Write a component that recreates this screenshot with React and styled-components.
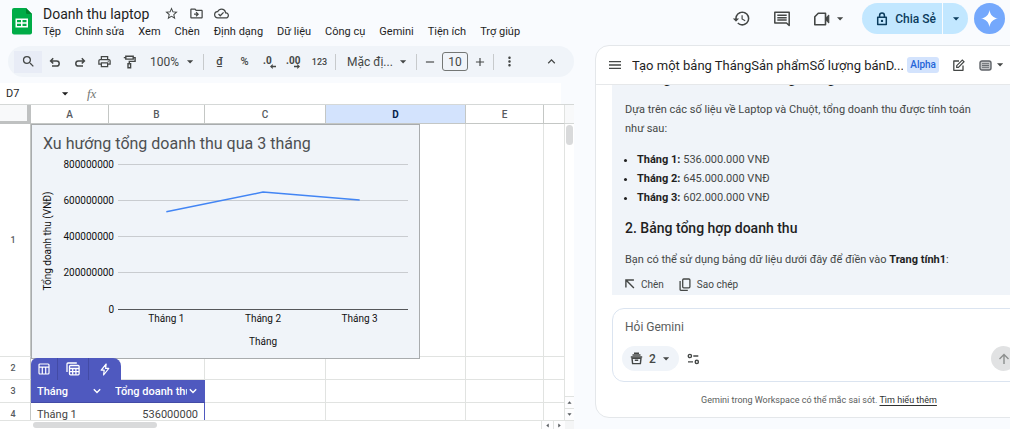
import React from "react";
import styled, { createGlobalStyle, css } from "styled-components";
import {
  MdStarBorder,
  MdOutlineDriveFileMove,
  MdOutlineCloudDone,
  MdSearch,
  MdOutlinePrint,
  MdHistory,
  MdMoreVert,
  MdKeyboardArrowUp,
  MdMenu,
  MdAdd,
  MdRemove,
} from "react-icons/md";

const GlobalStyle = createGlobalStyle`
  *, *::before, *::after { box-sizing: border-box; }
  body {
    margin: 0;
    background: #f9fbfe;
    color: #1f1f1f;
    font-family: Roboto, "Open Sans", sans-serif;
    font-size: 11px;
  }
  button, input, select {
    margin: 0;
    padding: 0;
    border: 0;
    background: none;
    color: inherit;
    font: inherit;
  }
  svg { display: block; flex: none; }
`;

/* ---------- icons ---------- */

const Caret = ({ size = 8 }) => (
  <svg width={size} height={size} viewBox="0 0 8 8" fill="currentColor" aria-hidden="true">
    <path d="M1 2.200h6.200L4.100 5.600z" />
  </svg>
);

const Stroke = ({ width = 16, height = 16, box, weight = 1.5, children }) => (
  <svg
    width={width}
    height={height}
    viewBox={box || `0 0 ${width} ${height}`}
    fill="none"
    stroke="currentColor"
    strokeWidth={weight}
    aria-hidden="true"
  >
    {children}
  </svg>
);

const SheetsLogo = () => (
  <svg width="20" height="27" viewBox="0 0 20 27" role="img" aria-label="Trang tính">
    <path d="M2 0h12l6 6v18.500a2 2 0 0 1-2 2H2a2 2 0 0 1-2-2V2a2 2 0 0 1 2-2z" fill="#00ac47" />
    <path d="M14 0l6 6h-4.500A1.500 1.500 0 0 1 14 4.500z" fill="#00832d" />
    <path
      d="M3.500 10.500h12.500v9H3.500zM5 12v2.200h4V12zm5.500 0v2.200h4V12zM5 15.700v2.300h4v-2.300zm5.500 0v2.300h4v-2.300z"
      fill="#fff"
      fillRule="evenodd"
    />
  </svg>
);

const UndoIcon = () => (
  <Stroke width={12} height={12}>
    <path d="M4.200 2.300L1.600 4.900l2.600 2.600M1.800 4.900h5.800a2.600 2.600 0 0 1 0 5.200H3" />
  </Stroke>
);

const RedoIcon = () => (
  <Stroke width={12} height={12}>
    <path d="M7.800 2.300l2.600 2.600-2.600 2.600M10.200 4.900H4.400a2.600 2.600 0 0 0 0 5.200H9" />
  </Stroke>
);

const PaintIcon = () => (
  <Stroke width={13} height={14} weight={1.4}>
    <path d="M2.800 1.200h7.400v2.900H2.800zM10.200 2.600h1.900v3.800H6.300v2.200M2.800 2.600H.800M5 8.800h2.600v4H5z" />
  </Stroke>
);

const DecimalIcon = ({ digits, direction }) => (
  <svg width="18" height="16" viewBox="0 0 18 16" fill="currentColor" aria-hidden="true">
    <text x={digits.length > 2 ? 0 : 2} y="10" fontSize="10" fontWeight="700" fontFamily="Roboto, sans-serif">
      {digits}
    </text>
    <path
      d={
        direction === "left"
          ? "M9 12.500l2.700-2.400v1.700H15v1.400h-3.300v1.700z"
          : "M14 12.500l-2.700-2.400v1.700H8v1.400h3.300v1.700z"
      }
    />
  </svg>
);

const CommentIcon = () => (
  <Stroke width={18} height={18}>
    <path d="M1.800 2.300h14.400v13.200l-2.700-2.500H1.800z" strokeLinejoin="round" />
    <path d="M4.300 5.300h9.400M4.300 7.700h9.400M4.300 10.100h9.400" />
  </Stroke>
);

const MeetIcon = () => (
  <Stroke width={18} height={16} weight={1.600}>
    <path d="M5.300 2.300h7.200v11.400H1.800V5.800z" strokeLinejoin="round" />
    <path d="M12.500 7.200L15.800 4v8l-3.300-3.200z" fill="currentColor" strokeWidth="1" />
  </Stroke>
);

const LockIcon = () => (
  <Stroke width={12} height={14} weight={1.500}>
    <path d="M1.700 5.300h8.600v7.200H1.700zM3.600 5.300V3.400a2.400 2.400 0 0 1 4.800 0v1.900" strokeLinejoin="round" />
    <circle cx="6" cy="8.900" r="1.200" fill="currentColor" stroke="none" />
  </Stroke>
);

const SparkIcon = () => (
  <svg width="17" height="17" viewBox="0 0 16 16" fill="#fff" aria-hidden="true">
    <path d="M8 0c.7 4.700 3.300 7.300 8 8-4.700.7-7.300 3.300-8 8-.7-4.700-3.300-7.300-8-8 4.700-.7 7.300-3.300 8-8z" />
  </svg>
);

const EditIcon = () => (
  <Stroke width={13} height={13} weight={1.300}>
    <path d="M7 2H1.800v9.300H11V6.500" strokeLinejoin="round" />
    <path d="M4.700 8.400V6.700L10.300 1l1.700 1.700-5.600 5.700z" strokeWidth="1.200" />
  </Stroke>
);

const CardIcon = () => (
  <svg width="13" height="11" viewBox="0 0 13 11" fill="none" stroke="#5f6368" aria-hidden="true">
    <rect x="1" y="1" width="11" height="9" rx="2" fill="#c4c6c8" strokeWidth="1.400" />
    <path d="M3 3.700h7M3 5.500h7M3 7.300h7" strokeWidth=".900" />
  </svg>
);

const InsertIcon = () => (
  <Stroke width={10} height={10} weight={1.400}>
    <path d="M.900 8.500V1h8M1.200 1.200l7.700 7.800" />
  </Stroke>
);

const CopyIcon = () => (
  <Stroke width={12} height={13} weight={1.300}>
    <rect x="3.700" y="1" width="7.200" height="8.800" rx="1" />
    <path d="M1.100 3v8.400a1 1 0 0 0 1 1h6.700" />
  </Stroke>
);

const SourceIcon = () => (
  <Stroke width={13} height={13} weight={1.400}>
    <path d="M2 6.200h9l-.6 5.400H2.600z" strokeLinejoin="round" />
    <path d="M.800 5h11.400M2.500 3h8M4 1.200h5" />
    <path d="M4.800 8.300h3.400" />
  </Stroke>
);

const TuneIcon = () => (
  <Stroke width={13} height={12} weight={1.400}>
    <circle cx="2.900" cy="3" r="1.600" />
    <path d="M6.300 3h5M1 8.900h5" />
    <circle cx="9.800" cy="8.900" r="1.600" />
  </Stroke>
);

const TableIcon = () => (
  <Stroke width={12} height={12} weight={1.200}>
    <rect x="1" y="1" width="10" height="10" rx="1" />
    <path d="M1 4.200h10M4.300 4.200V11M7.700 4.200V11" />
  </Stroke>
);

const TablesIcon = () => (
  <Stroke width={14} height={14} weight={1.300}>
    <rect x="3.500" y="3.500" width="9.600" height="9.300" rx="1" />
    <path d="M3.500 6.500h9.600M3.500 9.600h9.600M6.700 6.500v6.300M9.900 6.500v6.300M1 10V2a1 1 0 0 1 1-1h8.800" />
  </Stroke>
);

const BoltIcon = () => (
  <Stroke width={10} height={13} weight={1.200}>
    <path d="M6.200 1L1.200 7.200h3L3.600 12l5.200-6.600H5.600z" strokeLinejoin="round" />
  </Stroke>
);

const ChevronIcon = () => (
  <Stroke width={8} height={6} weight={1.400}>
    <path d="M.800 1.200L4 4.400l3.200-3.200" />
  </Stroke>
);

const ArrowUpIcon = () => (
  <Stroke width={12} height={12} weight={1.400}>
    <path d="M6 11V1.500M1.500 6L6 1.500 10.500 6" />
  </Stroke>
);

/* ---------- page frame ---------- */

const Page = styled.div`
  display: flex;
  flex-direction: column;
  height: 100vh;
  overflow: hidden;
`;

const TopBar = styled.header`
  display: flex;
  align-items: flex-start;
  flex: none;
  height: 45px;
  padding: 3px 5px 0 12px;
`;

const LogoLink = styled.a`
  margin-top: 5px;
`;

const TitleBlock = styled.div`
  flex: 1;
  min-width: 0;
  padding-left: 11px;
`;

const TitleRow = styled.div`
  display: flex;
  align-items: center;
  gap: 10px;
  height: 21px;
  color: #444746;
`;

const DocTitle = styled.h1`
  margin: 0 5px 0 0;
  color: #1f1f1f;
  font-size: 14px;
  font-weight: 400;
  white-space: nowrap;
`;

const IconButton = styled.button`
  display: flex;
  align-items: center;
  justify-content: center;
  gap: ${(p) => p.$gap || 0}px;
  flex: none;
  width: ${(p) => (p.$width ? `${p.$width}px` : "auto")};
  height: ${(p) => (p.$height ? `${p.$height}px` : "auto")};
  color: ${(p) => p.$color || "#444746"};
  background: ${(p) => p.$background || "none"};
  border-radius: ${(p) => p.$radius || 0}px;
`;

const MenuBar = styled.nav`
  display: flex;
  gap: 14px;
  color: #1f1f1f;
`;

const MenuButton = styled.button`
  height: 15px;
  font-size: 11px;
  white-space: nowrap;
`;

const TopActions = styled.div`
  display: flex;
  align-items: center;
  gap: 22px;
  height: 31px;
`;

const ShareGroup = styled.div`
  display: flex;
  gap: 1px;
  height: 31px;
  color: #0b3c5d;
`;

const ShareButton = styled.button`
  display: flex;
  align-items: center;
  gap: 7px;
  padding: 0 6px 0 14px;
  background: #c2e7ff;
  border-radius: 16px 0 0 16px;
  font-size: 12px;
  font-weight: 500;
`;

const ShareMenuButton = styled.button`
  display: flex;
  align-items: center;
  justify-content: center;
  width: 25px;
  background: #c2e7ff;
  border-radius: 0 16px 16px 0;
`;

const AccountGroup = styled.div`
  display: flex;
  gap: 6px;
  margin-left: -4px;
`;

const Main = styled.main`
  display: flex;
  flex: 1;
  gap: 21px;
  min-height: 0;
`;

/* ---------- spreadsheet ---------- */

const SheetColumn = styled.section`
  display: flex;
  flex-direction: column;
  flex: 1;
  min-width: 0;
`;

const Toolbar = styled.div`
  display: flex;
  align-items: center;
  flex: none;
  height: 31px;
  margin: 1px 0 6px 8px;
  padding: 0 10px 0 6px;
  background: #f0f4f9;
  border-radius: 16px;
  color: #444746;
`;

const ToolButton = styled.button`
  display: flex;
  align-items: center;
  justify-content: center;
  flex: none;
  width: ${(p) => p.$width || 25}px;
  height: 22px;
  font-size: ${(p) => p.$size || 11}px;
  font-weight: 500;
  ${(p) => p.$active && css`background: #e8ecf6;`}
  ${(p) => p.$last && css`margin-left: auto;`}
`;

const Divider = styled.span`
  flex: none;
  width: 1px;
  height: 16px;
  margin: 0 3px;
  background: #c7cacc;
`;

const SelectBox = styled.label`
  display: grid;
  flex: none;
  align-items: center;
  width: ${(p) => p.$width}px;
  > * { grid-area: 1 / 1; }
  > svg { justify-self: end; margin-right: 6px; pointer-events: none; }
`;

const Select = styled.select`
  appearance: none;
  width: 100%;
  padding: 0 16px 0 8px;
  font-size: 12px;
  outline: none;
`;

const SizeInput = styled.input`
  width: 26px;
  height: 19px;
  margin: 0 2px;
  border: 1px solid #747775;
  border-radius: 3px;
  font-size: 12px;
  text-align: center;
`;

const FormulaRow = styled.div`
  flex: none;
  padding-right: 13px;
  border-bottom: 1px solid #d5d8d7;
`;

const FormulaBar = styled.div`
  display: flex;
  align-items: center;
  height: 21px;
  padding-left: 6px;
  background: #fff;
`;

const NameBox = styled.input`
  width: 55px;
  font-size: 11px;
`;

const FxMark = styled.label`
  margin-left: 18px;
  color: #747775;
  font: italic 13px "Liberation Serif", serif;
`;

const FormulaInput = styled.input`
  flex: 1;
  min-width: 0;
  margin-left: 8px;
`;

const GridArea = styled.div`
  display: grid;
  grid-template-columns: 1fr 9px;
  grid-template-rows: 1fr 8px;
  flex: 1;
  min-height: 0;
  background: #fff;
`;

const GridView = styled.div`
  position: relative;
  overflow: hidden;
  border-bottom: 1px solid #e1e3e1;
`;

const Grid = styled.table`
  width: 100%;
  table-layout: fixed;
  border-collapse: separate;
  border-spacing: 0;
`;

const ColumnHead = styled.th`
  height: 19px;
  padding: 0;
  border-right: 1px solid #c4c7c5;
  border-bottom: 1px solid #c4c7c5;
  background: ${(p) => (p.$selected ? "#d3e3fd" : "#fff")};
  color: ${(p) => (p.$selected ? "#041e49" : "#575b5f")};
  font-size: 10px;
  font-weight: ${(p) => (p.$selected ? 700 : 500)};
  &:last-child { border-right: 1px solid #e1e3e1; }
`;

const Corner = styled.td`
  padding: 0;
  background: #f8f9fa;
  border-right: 4px solid #bfc1c1;
  border-bottom: 3px solid #bfc1c1;
`;

const RowHead = styled.th`
  padding: 0 4px 0 0;
  border-right: 1px solid #c4c7c5;
  border-bottom: 1px solid #e1e3e1;
  color: #575b5f;
  font-size: 9px;
  font-weight: 500;
`;

const Row = styled.tr`
  height: ${(p) => p.$height}px;
`;

const Cell = styled.td`
  padding: 0 7px 0 6px;
  border-right: 1px solid #e1e3e1;
  border-bottom: 1px solid #e1e3e1;
  color: #434343;
  font-size: 11px;
  text-align: ${(p) => p.$align || "left"};
  ${(p) => p.$first && css`border-right-color: transparent;`}
  ${(p) => p.$last && css`
    padding-right: 6px;
    border-right-color: #4f59bf;
  `}
`;

const TableHead = styled.th`
  padding: 0 8px 0 6px;
  background: #4f59bf;
  border-bottom: 1px solid #434ba6;
  color: #fff;
  font-size: 11px;
  font-weight: 500;
  text-align: left;
`;

const HeadContent = styled.div`
  display: flex;
  align-items: center;
  justify-content: space-between;
  gap: 2px;
  > span { overflow: hidden; white-space: nowrap; }
`;

const ChartFrame = styled.figure`
  position: absolute;
  top: 19px;
  left: 31px;
  width: 389px;
  height: 235px;
  margin: 0;
  background: #f0f4f9;
  border: 1px solid #a9acae;
`;

const TableTools = styled.div`
  position: absolute;
  top: 253px;
  left: 31px;
  display: flex;
  height: 22px;
  overflow: hidden;
  background: #4f59bf;
  border-radius: 6px 8px 0 0;
  > button + button { border-left: 1px solid #434ba6; }
`;

const VerticalBar = styled.div`
  display: flex;
  flex-direction: column;
  border-bottom: 1px solid #e1e3e1;
`;

const BarCap = styled.div`
  height: 19px;
  background: #f8f9fa;
  border-bottom: 1px solid #d5d8d7;
`;

const VerticalThumb = styled.div`
  width: 7px;
  height: 20px;
  margin: 1px auto auto;
  background: #d9dadb;
  border-radius: 4px;
`;

const HorizontalBar = styled.div`
  display: flex;
  align-items: center;
  padding-left: 33px;
`;

const HorizontalThumb = styled.div`
  width: 124px;
  height: 6px;
  margin-right: auto;
  background: #d9dadb;
  border-radius: 3px;
`;

const ArrowButton = styled.button`
  display: flex;
  align-items: center;
  justify-content: center;
  width: ${(p) => (p.$side ? "12px" : "100%")};
  height: ${(p) => (p.$side ? "8px" : "12px")};
  color: #575b5f;
  background: #fdfdfe;
  border: 0 solid #e1e3e1;
  ${(p) => (p.$side ? css`border-left-width: 1px;` : css`border-top-width: 1px;`)}
`;

const BarCorner = styled.div`
  background: #f4f5f6;
`;

const TinyArrow = ({ turn }) => (
  <svg width="5" height="5" viewBox="0 0 6 6" fill="currentColor" aria-hidden="true">
    <path d="M.500 4.500L3 1.500l2.500 3z" transform={`rotate(${turn} 3 3)`} />
  </svg>
);

/* ---------- side panel ---------- */

/* The panel is wider than its visible part and runs past the window's right edge. */
const Panel = styled.aside`
  display: flex;
  flex-direction: column;
  flex: none;
  width: 448px;
  margin: 0 -33px 11px 0;
  overflow: hidden;
  background: #fff;
  border: 1px solid #e4e7ea;
  border-radius: 14px;
`;

const PanelHeader = styled.div`
  display: flex;
  align-items: center;
  flex: none;
  height: 39px;
  padding: 0 25px 0 11px;
  border-bottom: 1px solid #e6e8ea;
  color: #444746;
`;

const PanelTitle = styled.h2`
  flex: 1;
  min-width: 0;
  margin: 0 4px 0 9px;
  overflow: hidden;
  color: #1f1f1f;
  font-size: 13px;
  font-weight: 400;
  white-space: nowrap;
`;

const Badge = styled.span`
  margin-right: 13px;
  padding: 0 3px;
  background: #d3e3fd;
  border-radius: 3px;
  color: #2464d8;
  font-size: 10px;
  font-weight: 500;
  line-height: 16px;
`;

const Answer = styled.article`
  display: flex;
  flex-direction: column;
  justify-content: flex-end;
  flex: 1;
  gap: 12px;
  min-height: 0;
  margin: 0 16px;
  padding: 0 13px 2px;
  overflow: hidden;
  background: #f0f4f9;
  line-height: 19px;
`;

const AnswerText = styled.p`
  margin: 0;
  color: #444746;
  font-size: 11px;
  > b { color: #1f1f1f; }
`;

const AnswerHeading = styled.h3`
  margin: 0;
  font-size: 14px;
  font-weight: 500;
`;

const AnswerList = styled.ul`
  margin: 0;
  padding-left: 12px;
  color: #444746;
  font-size: 11px;
  b, li::marker { color: #1f1f1f; }
`;

const AnswerActions = styled.div`
  display: flex;
  gap: 15px;
  height: 18px;
  margin-top: -6px;
`;

const TextButton = styled.button`
  display: flex;
  align-items: center;
  gap: 6px;
  color: #444746;
  font-size: 10px;
`;

const Composer = styled.form`
  flex: none;
  margin: 13px 16px 0;
  padding: 8px 9px 10px;
  border: 1px solid #dbe4f0;
  border-radius: 12px;
`;

const PromptInput = styled.input`
  display: block;
  width: 100%;
  height: 20px;
  padding-left: 3px;
  font-size: 12px;
  &::placeholder { color: #5a5d5c; opacity: 1; }
`;

const ComposerRow = styled.div`
  display: flex;
  align-items: center;
  gap: 8px;
  margin-top: 9px;
`;

const SourceButton = styled.button`
  display: flex;
  align-items: center;
  gap: 6px;
  height: 25px;
  padding: 0 9px 0 8px;
  background: #f0f4f9;
  border-radius: 13px;
  color: #444746;
  font-size: 12px;
  font-weight: 500;
`;

const SendButton = styled.button`
  display: flex;
  align-items: center;
  justify-content: center;
  width: 25px;
  height: 25px;
  margin-left: auto;
  background: #e1e2e3;
  border-radius: 50%;
  color: #8c8f8e;
`;

const Disclaimer = styled.p`
  flex: none;
  margin: 0;
  padding: 11px 0 10px;
  color: #5a5d5c;
  font-size: 9px;
  line-height: 14px;
  text-align: center;
  > a { color: #303231; text-underline-offset: 2px; }
`;

/* ---------- data ---------- */

const menus = ["Tệp", "Chỉnh sửa", "Xem", "Chèn", "Định dạng", "Dữ liệu", "Công cụ", "Gemini", "Tiện ích", "Trợ giúp"];

const columns = [
  { name: "A", width: 78 },
  { name: "B", width: 96 },
  { name: "C", width: 121 },
  { name: "D", width: 140 },
  { name: "E", width: 78 },
];

const revenue = [
  { label: "Tháng 1", value: 536000000, text: "536.000.000 VNĐ" },
  { label: "Tháng 2", value: 645000000, text: "645.000.000 VNĐ" },
  { label: "Tháng 3", value: 602000000, text: "602.000.000 VNĐ" },
];

/* ---------- parts ---------- */

const plot = { left: 86, right: 376, top: 39, bottom: 184, max: 800000000 };
const toY = (value) => plot.bottom - (value / plot.max) * (plot.bottom - plot.top);
const toX = (index) => plot.left + ((plot.right - plot.left) * (index + 0.5)) / revenue.length;

const RevenueChart = () => (
  <ChartFrame>
    <svg width="387" height="233" viewBox="0 0 387 233" fontFamily="Roboto, sans-serif" fontSize="10" fill="#111">
      <text x="11" y="24" fontSize="16" fill="#4d5052">
        Xu hướng tổng doanh thu qua 3 tháng
      </text>
      {[800000000, 600000000, 400000000, 200000000, 0].map((value) => (
        <g key={value}>
          <line
            x1={plot.left}
            x2={plot.right}
            y1={Math.floor(toY(value)) + 0.5}
            y2={Math.floor(toY(value)) + 0.5}
            stroke={value ? "#c9ccd0" : "#55575a"}
          />
          <text x={plot.left - 4} y={Math.floor(toY(value)) + 4} textAnchor="end">
            {value}
          </text>
        </g>
      ))}
      <polyline
        points={revenue.map((item, index) => `${toX(index)},${toY(item.value)}`).join(" ")}
        fill="none"
        stroke="#4285f4"
        strokeWidth="1.500"
      />
      {revenue.map((item, index) => (
        <text key={item.label} x={toX(index)} y="197" textAnchor="middle">
          {item.label}
        </text>
      ))}
      <text x="231" y="220" textAnchor="middle">
        Tháng
      </text>
      <text x="19" y="116" textAnchor="middle" transform="rotate(-90 19 116)">
        Tổng doanh thu (VNĐ)
      </text>
    </svg>
  </ChartFrame>
);

const EmptyCells = ({ count }) => Array.from({ length: count }, (_, index) => <Cell key={index} />);

const Spreadsheet = () => (
  <GridArea>
    <GridView>
      <Grid>
        <colgroup>
          <col width="31" />
          {columns.map((column) => (
            <col key={column.name} width={column.width} />
          ))}
          <col />
        </colgroup>
        <thead>
          <tr>
            <Corner />
            {columns.map((column) => (
              <ColumnHead key={column.name} scope="col" $selected={column.name === "D"}>
                {column.name}
              </ColumnHead>
            ))}
            <ColumnHead />
          </tr>
        </thead>
        <tbody>
          <Row $height={233}>
            <RowHead scope="row">1</RowHead>
            <EmptyCells count={6} />
          </Row>
          <Row $height={23}>
            <RowHead scope="row">2</RowHead>
            <EmptyCells count={6} />
          </Row>
          <Row $height={23}>
            <RowHead scope="row">3</RowHead>
            <TableHead>
              <HeadContent>
                <span>Tháng</span>
                <ChevronIcon />
              </HeadContent>
            </TableHead>
            <TableHead>
              <HeadContent>
                <span>Tổng doanh thu</span>
                <ChevronIcon />
              </HeadContent>
            </TableHead>
            <EmptyCells count={4} />
          </Row>
          <Row $height={23}>
            <RowHead scope="row">4</RowHead>
            <Cell $first>{revenue[0].label}</Cell>
            <Cell $last $align="right">
              {revenue[0].value}
            </Cell>
            <EmptyCells count={4} />
          </Row>
        </tbody>
      </Grid>
      <RevenueChart />
      <TableTools>
        <IconButton $width={26} $color="#fff" aria-label="Bảng">
          <TableIcon />
        </IconButton>
        <IconButton $width={31} $color="#fff" aria-label="Chế độ xem bảng">
          <TablesIcon />
        </IconButton>
        <IconButton $width={33} $color="#fff" aria-label="Thao tác nhanh">
          <BoltIcon />
        </IconButton>
      </TableTools>
    </GridView>
    <VerticalBar>
      <BarCap />
      <VerticalThumb />
      <ArrowButton aria-label="Cuộn lên">
        <TinyArrow turn={0} />
      </ArrowButton>
      <ArrowButton aria-label="Cuộn xuống">
        <TinyArrow turn={180} />
      </ArrowButton>
    </VerticalBar>
    <HorizontalBar>
      <HorizontalThumb />
      <ArrowButton $side aria-label="Cuộn sang trái">
        <TinyArrow turn={-90} />
      </ArrowButton>
      <ArrowButton $side aria-label="Cuộn sang phải">
        <TinyArrow turn={90} />
      </ArrowButton>
    </HorizontalBar>
    <BarCorner />
  </GridArea>
);

const SheetToolbar = () => (
  <Toolbar role="toolbar" aria-label="Thanh công cụ">
    <ToolButton $width={28} $active aria-label="Tìm kiếm">
      <MdSearch size={15} />
    </ToolButton>
    <ToolButton aria-label="Hủy">
      <UndoIcon />
    </ToolButton>
    <ToolButton aria-label="Làm lại">
      <RedoIcon />
    </ToolButton>
    <ToolButton aria-label="In">
      <MdOutlinePrint size={15} />
    </ToolButton>
    <ToolButton aria-label="Sao chép định dạng">
      <PaintIcon />
    </ToolButton>
    <SelectBox $width={58}>
      <Select aria-label="Thu phóng">
        <option>100%</option>
      </Select>
      <Caret />
    </SelectBox>
    <Divider />
    <ToolButton>₫</ToolButton>
    <ToolButton>%</ToolButton>
    <ToolButton aria-label="Giảm số chữ số thập phân">
      <DecimalIcon digits=".0" direction="left" />
    </ToolButton>
    <ToolButton aria-label="Tăng số chữ số thập phân">
      <DecimalIcon digits=".00" direction="right" />
    </ToolButton>
    <ToolButton $size={9}>123</ToolButton>
    <Divider />
    <SelectBox $width={74}>
      <Select aria-label="Phông chữ">
        <option>Mặc đị...</option>
      </Select>
      <Caret />
    </SelectBox>
    <Divider />
    <ToolButton $width={20} aria-label="Giảm cỡ chữ">
      <MdRemove size={14} />
    </ToolButton>
    <SizeInput defaultValue="10" aria-label="Cỡ chữ" />
    <ToolButton $width={20} aria-label="Tăng cỡ chữ">
      <MdAdd size={14} />
    </ToolButton>
    <Divider />
    <ToolButton aria-label="Tùy chọn khác">
      <MdMoreVert size={15} />
    </ToolButton>
    <ToolButton $last aria-label="Ẩn trình đơn">
      <MdKeyboardArrowUp size={15} />
    </ToolButton>
  </Toolbar>
);

const GeminiPanel = () => (
  <Panel>
    <PanelHeader>
      <IconButton aria-label="Trình đơn">
        <MdMenu size={16} />
      </IconButton>
      <PanelTitle>Tạo một bảng ThángSản phẩmSố lượng bánD...</PanelTitle>
      <Badge>Alpha</Badge>
      <IconButton $width={13} aria-label="Cuộc trò chuyện mới">
        <EditIcon />
      </IconButton>
      <IconButton $width={52} $gap={4} aria-label="Chế độ xem">
        <CardIcon />
        <Caret />
      </IconButton>
    </PanelHeader>
    <Answer>
      <AnswerHeading>1. Tổng doanh thu của từng tháng</AnswerHeading>
      <AnswerText>
        Dựa trên các số liệu về Laptop và Chuột, tổng doanh thu được tính toán
        <br />
        như sau:
      </AnswerText>
      <AnswerList>
        {revenue.map((item) => (
          <li key={item.label}>
            <b>{item.label}:</b> {item.text}
          </li>
        ))}
      </AnswerList>
      <AnswerHeading>2. Bảng tổng hợp doanh thu</AnswerHeading>
      <AnswerText>
        Bạn có thể sử dụng bảng dữ liệu dưới đây để điền vào <b>Trang tính1</b>:
      </AnswerText>
      <AnswerActions>
        <TextButton>
          <InsertIcon />
          Chèn
        </TextButton>
        <TextButton>
          <CopyIcon />
          Sao chép
        </TextButton>
      </AnswerActions>
    </Answer>
    <Composer onSubmit={(event) => event.preventDefault()}>
      <PromptInput placeholder="Hỏi Gemini" aria-label="Hỏi Gemini" />
      <ComposerRow>
        <SourceButton type="button">
          <SourceIcon />
          2
          <Caret />
        </SourceButton>
        <IconButton type="button" aria-label="Cài đặt">
          <TuneIcon />
        </IconButton>
        <SendButton aria-label="Gửi">
          <ArrowUpIcon />
        </SendButton>
      </ComposerRow>
    </Composer>
    <Disclaimer>
      Gemini trong Workspace có thể mắc sai sót. <a href="#help">Tìm hiểu thêm</a>
    </Disclaimer>
  </Panel>
);

export default function App() {
  return (
    <Page>
      <GlobalStyle />
      <TopBar>
        <LogoLink href="#home">
          <SheetsLogo />
        </LogoLink>
        <TitleBlock>
          <TitleRow>
            <DocTitle>Doanh thu laptop</DocTitle>
            <IconButton aria-label="Gắn dấu sao">
              <MdStarBorder size={15} />
            </IconButton>
            <IconButton aria-label="Di chuyển">
              <MdOutlineDriveFileMove size={15} />
            </IconButton>
            <IconButton aria-label="Trạng thái tài liệu">
              <MdOutlineCloudDone size={15} />
            </IconButton>
          </TitleRow>
          <MenuBar>
            {menus.map((name) => (
              <MenuButton key={name}>{name}</MenuButton>
            ))}
          </MenuBar>
        </TitleBlock>
        <TopActions>
          <IconButton aria-label="Nhật ký phiên bản">
            <MdHistory size={19} />
          </IconButton>
          <IconButton aria-label="Nhận xét">
            <CommentIcon />
          </IconButton>
          <IconButton $gap={5} aria-label="Tham gia cuộc gọi">
            <MeetIcon />
            <Caret />
          </IconButton>
          <AccountGroup>
            <ShareGroup>
              <ShareButton>
                <LockIcon />
                Chia Sẻ
              </ShareButton>
              <ShareMenuButton aria-label="Tùy chọn chia sẻ">
                <Caret />
              </ShareMenuButton>
            </ShareGroup>
            <IconButton $width={31} $height={31} $radius={16} $background="#74a8fc" aria-label="Gemini">
              <SparkIcon />
            </IconButton>
          </AccountGroup>
        </TopActions>
      </TopBar>
      <Main>
        <SheetColumn>
          <SheetToolbar />
          <FormulaRow>
            <FormulaBar>
              <NameBox defaultValue="D7" aria-label="Hộp tên" />
              <Caret />
              <FxMark htmlFor="formula">fx</FxMark>
              <FormulaInput id="formula" />
            </FormulaBar>
          </FormulaRow>
          <Spreadsheet />
        </SheetColumn>
        <GeminiPanel />
      </Main>
    </Page>
  );
}
